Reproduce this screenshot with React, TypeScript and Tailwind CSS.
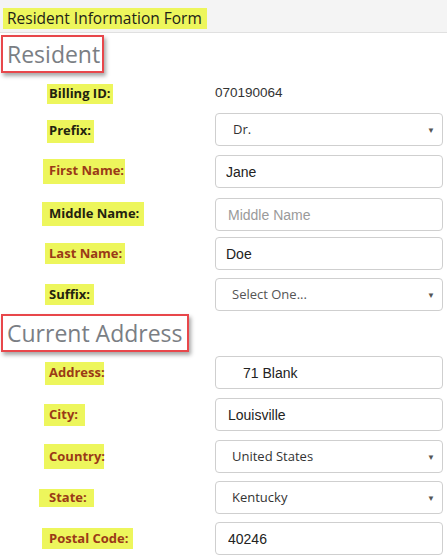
import React from 'react';

type Row = {
  label: string;
  kind: 'select' | 'input';
  value?: string;
  placeholder?: string;
  red: boolean;
  hl: string;
  mt: string;
  pad: string;
  valueColor?: string;
};

const residentRows: Row[] = [
  { label: 'Prefix:', kind: 'select', value: 'Dr.', red: false, hl: 'ml-[47px] w-[47px] h-[23px] pl-[2px] mt-[3px]', mt: 'mt-[3px]', pad: 'pl-[17px]' },
  { label: 'First Name:', kind: 'input', value: 'Jane', red: true, hl: 'ml-[43px] w-[82px] h-[25px] pl-[6px] -mt-[1px]', mt: 'mt-[9px]', pad: 'pl-[10px]' },
  { label: 'Middle Name:', kind: 'input', placeholder: 'Middle Name', red: false, hl: 'ml-[42px] w-[102px] h-[24px] pl-[7px] -mt-[1px]', mt: 'mt-[10px]', pad: 'pl-[12px]' },
  { label: 'Last Name:', kind: 'input', value: 'Doe', red: true, hl: 'ml-[45px] w-[80px] h-[21px] pl-[4px]', mt: 'mt-[6px]', pad: 'pl-[10px]' },
  { label: 'Suffix:', kind: 'select', value: 'Select One...', valueColor: 'text-[#555]', red: false, hl: 'ml-[45px] w-[49px] h-[21px] pl-[4px]', mt: 'mt-[8px]', pad: 'pl-[16px]' },
];

const addressRows: Row[] = [
  { label: 'Address:', kind: 'input', value: '71 Blank', red: true, hl: 'ml-[45px] w-[59px] h-[23px] pl-[4px] mt-[1px]', mt: 'mt-[4px]', pad: 'pl-[27px]' },
  { label: 'City:', kind: 'input', value: 'Louisville', red: true, hl: 'ml-[44px] w-[41px] h-[22px] pl-[5px]', mt: 'mt-[9px]', pad: 'pl-[12px]' },
  { label: 'Country:', kind: 'select', value: 'United States', red: true, hl: 'ml-[44px] w-[60px] h-[25px] pl-[5px]', mt: 'mt-[9px]', pad: 'pl-[16px]' },
  { label: 'State:', kind: 'select', value: 'Kentucky', red: true, hl: 'ml-[39px] w-[55px] h-[18px] pl-[10px] mt-[1px]', mt: 'mt-[8px]', pad: 'pl-[16px]' },
  { label: 'Postal Code:', kind: 'input', value: '40246', red: true, hl: 'ml-[42px] w-[91px] h-[21px] pl-[7px]', mt: 'mt-[8px]', pad: 'pl-[12px]' },
];

const FormRow = ({ row }: { row: Row }) => (
  <div className={`flex items-center h-[33px] ${row.mt}`}>
    <div className="w-[215px] shrink-0 flex items-center">
      <span
        className={`${row.hl} flex items-center bg-[#edf65c] text-[13px] font-bold font-['Open_Sans',sans-serif] whitespace-nowrap ${
          row.red ? 'text-[#9a3a17]' : 'text-[#23230f]'
        }`}
      >
        {row.label}
      </span>
    </div>
    {row.kind === 'select' ? (
      <div className={`w-[228px] h-[33px] rounded border border-[#cfcfcf] bg-white flex items-center justify-between ${row.pad} pr-[7px]`}>
        <span className={`text-[13px] font-['Open_Sans',sans-serif] ${row.valueColor ?? 'text-[#333]'}`}>{row.value}</span>
        <span className="text-[8px] text-[#555] leading-none">▼</span>
      </div>
    ) : (
      <input
        readOnly
        defaultValue={row.value}
        placeholder={row.placeholder}
        className={`w-[228px] h-[33px] rounded border border-[#cfcfcf] bg-white ${row.pad} text-[14px] text-[#222] font-['Liberation_Sans',Arial,sans-serif] placeholder:text-[#9a9a9a] outline-none`}
      />
    )}
  </div>
);

const SectionTitle = ({ text, w }: { text: string; w: string }) => (
  <div className={`ml-[1px] ${w} h-[38px] border-2 border-[#e8474b] shadow-[2px_3px_4px_rgba(0,0,0,0.35)] bg-white flex items-center pl-[4px]`}>
    <span className="text-[23px] text-[#7a7e84] font-['Open_Sans',sans-serif] leading-none whitespace-nowrap">{text}</span>
  </div>
);

export default function App() {
  return (
    <div className="w-[447px] h-[560px] bg-white overflow-hidden">
      {/* Header bar */}
      <div className="h-[33px] bg-[#f4f4f4] border-b border-[#e0e0e0] pt-[8px]">
        <span className="ml-[3px] w-[204px] h-[21px] pl-[4px] flex items-center bg-[#edf65c] text-[15.5px] text-[#222218] font-['Open_Sans',sans-serif] whitespace-nowrap">
          Resident Information Form
        </span>
      </div>

      <div className="pr-[4px]">
        <div className="mt-[2px]">
          <SectionTitle text="Resident" w="w-[103px]" />
        </div>

        {/* Billing ID */}
        <div className="flex items-center h-[33px] mt-[4px]">
          <div className="w-[215px] shrink-0 flex items-center">
            <span className="ml-[47px] w-[66px] h-[20px] pl-[2px] flex items-center bg-[#edf65c] text-[13px] font-bold text-[#23230f] font-['Open_Sans',sans-serif] whitespace-nowrap">
              Billing ID:
            </span>
          </div>
          <span className="text-[13.5px] text-[#333] font-['Liberation_Sans',Arial,sans-serif]">070190064</span>
        </div>

        {residentRows.map((r) => (
          <FormRow key={r.label} row={r} />
        ))}

        <div className="mt-[3px]">
          <SectionTitle text="Current Address" w="w-[188px]" />
        </div>

        {addressRows.map((r) => (
          <FormRow key={r.label} row={r} />
        ))}
      </div>
    </div>
  );
}
